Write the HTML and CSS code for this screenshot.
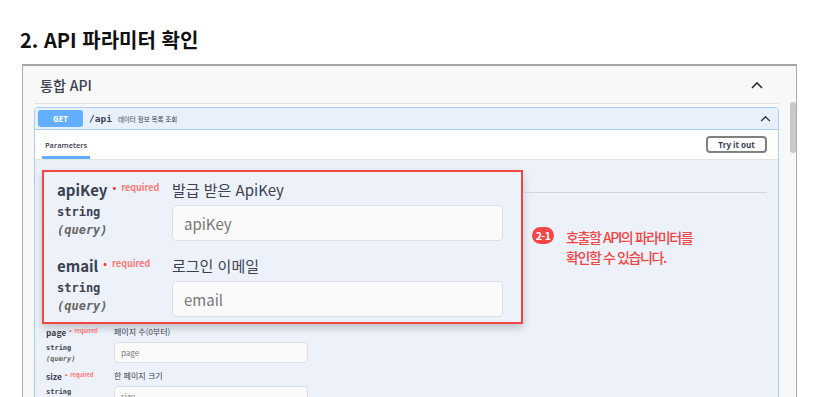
FILE: index.html
```html
<!DOCTYPE html>
<html lang="ko">
<head>
    <meta charset="UTF-8">
    <title>API 파라미터 확인</title>
    <link rel="stylesheet" href="styles.css">
</head>
<body>
<div class="title">2. API 파라미터 확인</div>
<div class="frame">
    <div class="main">
        <div class="tag-head">
            <span>통합 API</span>
            <svg class="chev" width="12" height="8" viewBox="0 0 12 8"><polyline points="1,7 6,2 11,7" fill="none" stroke="#333" stroke-width="1.6"/></svg>
        </div>
        <div class="opblock">
            <div class="op-summary">
                <span class="method">GET</span>
                <span class="path">/api</span>
                <span class="op-desc">데이터 정보 목록 조회</span>
                <svg class="chev chev-sm" width="11" height="7" viewBox="0 0 12 8"><polyline points="1,7 6,2 11,7" fill="none" stroke="#333" stroke-width="1.6"/></svg>
            </div>
            <div class="tabs">
                <span class="tab">Parameters</span>
                <button class="try">Try it out</button>
            </div>
            <div class="params">
                <div class="focus-row">
                    <div class="zoom-box">
                        <div class="param big">
                            <div>
                                <div class="p-name">apiKey<span class="dot">•</span><span class="req">required</span></div>
                                <div class="p-type">string</div>
                                <div class="p-in">(query)</div>
                            </div>
                            <div>
                                <div class="desc">발급 받은 ApiKey</div>
                                <input class="field" placeholder="apiKey">
                            </div>
                        </div>
                        <div class="param big">
                            <div>
                                <div class="p-name">email<span class="dot">•</span><span class="req">required</span></div>
                                <div class="p-type">string</div>
                                <div class="p-in">(query)</div>
                            </div>
                            <div>
                                <div class="desc">로그인 이메일</div>
                                <input class="field" placeholder="email">
                            </div>
                        </div>
                    </div>
                    <div class="aside">
                        <div class="thead"></div>
                        <div class="callout">
                            <span class="pill">2-1</span>
                            <p>호출할 API의 파라미터를<br>확인할 수 있습니다.</p>
                        </div>
                    </div>
                </div>
                <div class="param small">
                    <div>
                        <div class="p-name">page<span class="dot">•</span><span class="req">required</span></div>
                        <div class="p-type">string</div>
                        <div class="p-in">(query)</div>
                    </div>
                    <div>
                        <div class="desc">페이지 수(0부터)</div>
                        <input class="field" placeholder="page">
                    </div>
                </div>
                <div class="param small">
                    <div>
                        <div class="p-name">size<span class="dot">•</span><span class="req">required</span></div>
                        <div class="p-type">string</div>
                        <div class="p-in">(query)</div>
                    </div>
                    <div>
                        <div class="desc">한 페이지 크기</div>
                        <input class="field" placeholder="size">
                    </div>
                </div>
            </div>
        </div>
    </div>
    <div class="scrollbar"><div class="thumb"></div></div>
</div>
</body>
</html>
```
FILE: styles.css
```css
*{
    margin: 0;
    padding: 0;
    box-sizing: border-box;
}
body{
    background: #fff;
    font-family: "Noto Sans CJK KR", "Noto Sans", sans-serif;
    color: #3b4151;
    overflow: hidden;
}
.title{
    margin: 28px 0 12px 20px;
    font-size: 20px;
    line-height: 24px;
    font-weight: 700;
    color: #111;
}
.frame{
    margin-left: 22px;
    width: 775px;
    height: 420px;
    border: 1px solid #ababab;
    border-top: 2px solid #a3a3a3;
    background: #f8f8f8;
    display: flex;
}
.main{
    flex: 1;
    padding-left: 11px;
}
.scrollbar{
    width: 17px;
}
.thumb{
    margin: 36px 0 0 11px;
    width: 6px;
    height: 51px;
    border-radius: 3px;
    background: #c9c9c9;
}
.tag-head{
    height: 38px;
    padding: 0 16px 0 6px;
    border-bottom: 1px solid #e2e2e2;
    display: flex;
    align-items: center;
    justify-content: space-between;
    font-size: 14px;
    font-weight: 500;
}
.opblock{
    margin-top: 3px;
    border: 1px solid #a9cef6;
    border-radius: 3px;
    background: #edf2fa;
}
.op-summary{
    height: 22px;
    padding: 0 7px 0 3px;
    display: flex;
    align-items: center;
    background: #e8f0fb;
    border-bottom: 1px solid #a9cef6;
}
.method{
    width: 45px;
    height: 17px;
    line-height: 17px;
    border-radius: 3px;
    background: #61affe;
    color: #fff;
    text-align: center;
    font-size: 8px;
    font-weight: 700;
    font-family: "Open Sans", "Noto Sans", sans-serif;
}
.path{
    margin-left: 6px;
    font-family: "DejaVu Sans Mono", monospace;
    font-weight: 700;
    font-size: 9.5px;
}
.op-desc{
    margin-left: 6px;
    font-size: 6.5px;
}
.chev-sm{
    margin-left: auto;
}
.tabs{
    height: 30px;
    padding: 0 11px 0 7px;
    background: #fff;
    border-bottom: 1px solid #dfe4ea;
    display: flex;
    align-items: center;
    justify-content: space-between;
}
.tab{
    align-self: stretch;
    display: flex;
    align-items: center;
    padding: 3px 3px 0;
    border-bottom: 3px solid #61affe;
    font-size: 7.5px;
    font-weight: 600;
    font-family: "Open Sans", "Noto Sans", sans-serif;
}
.try{
    width: 61px;
    height: 17px;
    border: 2px solid #808080;
    border-radius: 4px;
    background: #fff;
    font-size: 8px;
    font-weight: 700;
    font-family: "Open Sans", "Noto Sans", sans-serif;
    color: #3b4151;
}
.params{
    padding: 10px 0 0 7px;
}
.focus-row{
    display: flex;
    align-items: flex-start;
}
.zoom-box{
    width: 481px;
    padding: 8px 18px 5px 13px;
    border: 2px solid #f44646;
    background: #edf2fa;
    box-shadow: 0 4px 8px rgba(0, 0, 0, .2);
}
.aside{
    flex: 1;
    margin-right: 11px;
}
.thead{
    height: 23px;
    border-bottom: 1px solid #cfd5df;
}
.callout{
    margin: 34px 0 0 9px;
    display: flex;
    align-items: flex-start;
    color: #f04545;
}
.pill{
    width: 22px;
    height: 17px;
    border-radius: 9px;
    background: #f44646;
    color: #fff;
    font-size: 10.5px;
    font-weight: 700;
    line-height: 17px;
    text-align: center;
    letter-spacing: -.6px;
}
.callout p{
    margin-left: 12px;
    font-size: 14px;
    font-weight: 500;
    line-height: 20px;
    letter-spacing: -1.4px;
}
.param{
    display: grid;
}
.p-type, .p-in{
    font-family: "DejaVu Sans Mono", monospace;
}
.p-type{
    font-weight: 700;
}
.p-in{
    font-style: italic;
    font-weight: 600;
    color: #666;
}
.dot{
    color: #f33;
    position: relative;
}
.req{
    color: #f77;
    position: relative;
}
.field{
    display: block;
    width: 100%;
    border: 1px solid #dcdfe4;
    border-radius: 4px;
    background: #fafafa;
    font-family: "Noto Sans CJK KR", "Noto Sans", sans-serif;
    color: #3b4151;
    outline: none;
}
.field::placeholder{
    color: #777;
}
/* 확대 표시 */
.big{
    grid-template-columns: 115px 1fr;
}
.big + .big{
    margin-top: 15px;
}
.big .p-name{
    height: 20px;
    line-height: 20px;
    font-size: 15px;
    font-weight: 600;
}
.big .dot{
    margin-left: 5px;
    font-size: 10px;
    top: -5px;
}
.big .req{
    margin-left: 5px;
    font-size: 9px;
    top: -5px;
}
.big .p-type{
    margin-top: 3px;
    line-height: 18px;
    font-size: 12px;
}
.big .p-in{
    line-height: 18px;
    font-size: 12px;
}
.big .desc{
    line-height: 20px;
    font-size: 15px;
}
.big .field{
    margin-top: 5px;
    height: 36px;
    padding: 0 11px;
    font-size: 15px;
}
/* 원래 크기 */
.small{
    margin-left: 4px;
    grid-template-columns: 68px 194px;
}
.focus-row + .small{
    margin-top: 2px;
}
.small + .small{
    margin-top: 6px;
}
.small .p-name{
    line-height: 12px;
    font-size: 8.5px;
    font-weight: 600;
}
.small .dot{
    margin-left: 3px;
    font-size: 6px;
    top: -3px;
}
.small .req{
    margin-left: 3px;
    font-size: 5.5px;
    top: -3px;
}
.small .p-type{
    margin-top: 2px;
    line-height: 12px;
    font-size: 7px;
}
.small .p-in{
    line-height: 10px;
    font-size: 7px;
}
.small .desc{
    line-height: 12px;
    font-size: 8px;
}
.small .field{
    margin-top: 4px;
    height: 21px;
    padding: 0 6px;
    font-size: 8px;
}
```
